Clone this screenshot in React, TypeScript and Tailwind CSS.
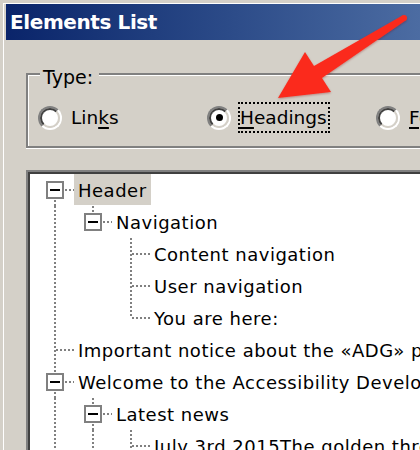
import React from "react";

type Row = {
  level: number;
  text: string;
  anc: boolean[];
  box: boolean;
  hasNext: boolean;
  firstRoot?: boolean;
  selected?: boolean;
};

const rows: Row[] = [
  { level: 0, text: "Header", anc: [], box: true, hasNext: true, firstRoot: true, selected: true },
  { level: 1, text: "Navigation", anc: [true], box: true, hasNext: false },
  { level: 2, text: "Content navigation", anc: [true, false], box: false, hasNext: true },
  { level: 2, text: "User navigation", anc: [true, false], box: false, hasNext: true },
  { level: 2, text: "You are here:", anc: [true, false], box: false, hasNext: false },
  { level: 0, text: "Important notice about the «ADG» project", anc: [], box: false, hasNext: true },
  { level: 0, text: "Welcome to the Accessibility Developer Guide", anc: [], box: true, hasNext: true },
  { level: 1, text: "Latest news", anc: [true], box: true, hasNext: true },
  { level: 2, text: "July 3rd 2015The golden three-second rule", anc: [true, true], box: false, hasNext: true },
];

const DOT = { stroke: "#808080", strokeWidth: 2, strokeDasharray: "2 2" };

function AncCol({ on }: { on: boolean }) {
  return (
    <svg width={38} height={32} className="shrink-0">
      {on && <line x1={19} y1={0} x2={19} y2={32} {...DOT} />}
    </svg>
  );
}

function Connector({ r }: { r: Row }) {
  return (
    <svg width={38} height={32} className="shrink-0">
      {!r.firstRoot && <line x1={19} y1={0} x2={19} y2={r.box ? 7 : 16} {...DOT} />}
      {r.hasNext && <line x1={19} y1={r.box ? 26 : 16} x2={19} y2={32} {...DOT} />}
      <line x1={r.box ? 29 : 20} y1={16} x2={38} y2={16} {...DOT} />
      {r.box && (
        <>
          <rect x={11} y={8} width={16} height={16} fill="#fff" stroke="#808080" strokeWidth={2} />
          <line x1={14} y1={16} x2={24} y2={16} stroke="#000" strokeWidth={2} />
        </>
      )}
    </svg>
  );
}

function Radio({ checked }: { checked?: boolean }) {
  return (
    <span className="block w-6 h-6 shrink-0 rounded-full border-2 border-t-[#808080] border-l-[#808080] border-b-white border-r-white">
      <span className="flex w-full h-full items-center justify-center rounded-full border-2 border-t-[#404040] border-l-[#404040] border-b-[#d4d0c8] border-r-[#d4d0c8] bg-white">
        {checked && <span className="block w-[7px] h-[7px] rounded-full bg-black" />}
      </span>
    </span>
  );
}

function Option({
  pre,
  key1,
  post,
  checked,
  focused,
}: {
  pre: string;
  key1: string;
  post: string;
  checked?: boolean;
  focused?: boolean;
}) {
  return (
    <div className="w-[169px] shrink-0 flex items-center gap-[7px]">
      <Radio checked={checked} />
      <span
        className={`h-[31px] border-2 border-dotted pr-[1px] leading-[27px] text-[18.5px] whitespace-nowrap ${
          focused ? "border-black" : "border-transparent"
        }`}
      >
        {pre}
        <span className="underline decoration-[2px] underline-offset-[3px]">{key1}</span>
        {post}
      </span>
    </div>
  );
}

export default function App() {
  return (
    <div className="relative w-[420px] h-[450px] overflow-hidden bg-[#d4d0c8] font-['DejaVu_Sans',sans-serif] text-black">
      <div className="ml-[3px] mt-[3px] h-full border-l border-t border-white pl-[2px]">
        <div className="h-[36px] w-[414px] flex items-center pl-[4px] bg-linear-to-r from-[#0a246a] to-[#4c6ca2]">
          <span className="text-white font-bold text-[20px] tracking-[-0.4px] leading-none">Elements List</span>
        </div>

        <div className="mt-[33px] ml-[20px] w-[600px] border-2 border-[#808080] shadow-[inset_1px_1px_0_#fff,0_1px_0_#fff]">
          <div className="-mt-[9px] ml-[12px] w-fit pl-[3px] pr-[6px] h-[22px] leading-[22px] text-[19px] bg-[#d4d0c8]">
            Type:
          </div>
          <div className="mt-[14px] mb-[13px] pl-[10px] flex h-[31px]">
            <Option pre="Lin" key1="k" post="s" />
            <Option pre="" key1="H" post="eadings" checked focused />
            <Option pre="" key1="F" post="orm fields" />
          </div>
        </div>

        <div className="mt-[22px] ml-[20px] w-[600px] h-[400px] border-2 border-[#808080] shadow-[inset_2px_2px_0_#404040] bg-white pl-[8px] pt-[2px]">
          {rows.map((r, i) => (
            <div key={i} className="flex h-[32px] whitespace-nowrap">
              {r.anc.map((a, j) => (
                <AncCol key={j} on={a} />
              ))}
              <Connector r={r} />
              <span
                className={`h-[31px] px-[4px] pt-[2px] leading-[29px] text-[18px] tracking-[0.5px] ${
                  r.selected ? "bg-[#d4d0c8]" : ""
                }`}
              >
                {r.text}
              </span>
            </div>
          ))}
        </div>
      </div>

      <svg className="absolute inset-0 pointer-events-none" width={420} height={450}>
        <defs>
          <filter id="sh" x="-10%" y="-10%" width="120%" height="120%">
            <feDropShadow dx="0" dy="1" stdDeviation="1" floodColor="#7a0000" floodOpacity="0.35" />
          </filter>
        </defs>
        <g filter="url(#sh)" fill="#fb2b1e">
          <polygon points="278,98 305,52 314,66 402.4,15.5 405.6,20.5 322,78 331,92" />
          <circle cx={404} cy={18} r={3} />
        </g>
      </svg>
    </div>
  );
}
